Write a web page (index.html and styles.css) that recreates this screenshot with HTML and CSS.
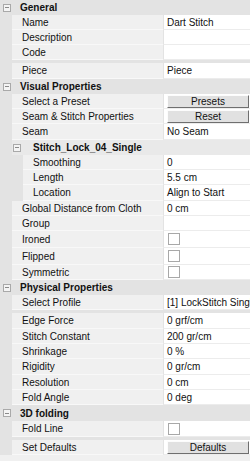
FILE: index.html
```html
<!DOCTYPE html>
<html lang="en">
<head>
  <meta charset="UTF-8" />
  <title>Property Editor</title>
  <link rel="stylesheet" href="styles.css">
</head>
<body>

<div class="props">

  <div class="group"><span class="toggle"></span>General</div>
  <div class="row"><span class="gut"></span><span class="label">Name</span><span class="value">Dart Stitch</span></div>
  <div class="row"><span class="gut"></span><span class="label">Description</span><span class="value"></span></div>
  <div class="row"><span class="gut"></span><span class="label">Code</span><span class="value"></span></div>
  <div class="band"></div>
  <div class="row tall"><span class="gut"></span><span class="label">Piece</span><span class="value">Piece</span></div>

  <div class="group"><span class="toggle"></span>Visual Properties</div>
  <div class="row"><span class="gut"></span><span class="label">Select a Preset</span><span class="value"><span class="btn">Presets</span></span></div>
  <div class="row"><span class="gut"></span><span class="label">Seam &amp; Stitch Properties</span><span class="value"><span class="btn">Reset</span></span></div>
  <div class="row tall"><span class="gut"></span><span class="label">Seam</span><span class="value">No Seam</span></div>
  <div class="group sub"><span class="gut"></span><span class="toggle"></span>Stitch_Lock_04_Single</div>
  <div class="row inner"><span class="gut"></span><span class="label">Smoothing</span><span class="value">0</span></div>
  <div class="row inner"><span class="gut"></span><span class="label">Length</span><span class="value">5.5 cm</span></div>
  <div class="row inner tall"><span class="gut"></span><span class="label">Location</span><span class="value">Align to Start</span></div>
  <div class="row"><span class="gut"></span><span class="label">Global Distance from Cloth</span><span class="value">0 cm</span></div>
  <div class="row"><span class="gut"></span><span class="label">Group</span><span class="value"></span></div>
  <div class="row check"><span class="gut"></span><span class="label">Ironed</span><span class="value"><span class="box"></span></span></div>
  <div class="row check"><span class="gut"></span><span class="label">Flipped</span><span class="value"><span class="box"></span></span></div>
  <div class="row"><span class="gut"></span><span class="label">Symmetric</span><span class="value"><span class="box"></span></span></div>

  <div class="group"><span class="toggle"></span>Physical Properties</div>
  <div class="row"><span class="gut"></span><span class="label">Select Profile</span><span class="value">[1] LockStitch Single</span></div>
  <div class="band"></div>
  <div class="row tall"><span class="gut"></span><span class="label">Edge Force</span><span class="value">0 grf/cm</span></div>
  <div class="row"><span class="gut"></span><span class="label">Stitch Constant</span><span class="value">200 gr/cm</span></div>
  <div class="row"><span class="gut"></span><span class="label">Shrinkage</span><span class="value">0 %</span></div>
  <div class="row tall"><span class="gut"></span><span class="label">Rigidity</span><span class="value">0 gr/cm</span></div>
  <div class="row"><span class="gut"></span><span class="label">Resolution</span><span class="value">0 cm</span></div>
  <div class="row"><span class="gut"></span><span class="label">Fold Angle</span><span class="value">0 deg</span></div>

  <div class="group tall"><span class="toggle"></span>3D folding</div>
  <div class="row tall"><span class="gut"></span><span class="label">Fold Line</span><span class="value"><span class="box"></span></span></div>
  <div class="band"></div>
  <div class="row"><span class="gut"></span><span class="label">Set Defaults</span><span class="value"><span class="btn">Defaults</span></span></div>

</div>

</body>
</html>
```

FILE: styles.css
```css
body {
  margin: 0;
  background-color: #f0f0f0;
  font-family: 'Liberation Sans', Arial, sans-serif;
  font-size: 10px;
  color: #111;
}
.props {
  width: 250px;
  overflow: hidden;
}
.group {
  display: flex;
  align-items: center;
  height: 15px;
  background-color: #e3e3e3;
  font-weight: bold;
  white-space: nowrap;
}
.group.tall { height: 16px; }
.toggle {
  box-sizing: border-box;
  width: 8px;
  height: 8px;
  margin: 0 9px 0 3px;
  border: 1px solid #a9a9a9;
  background: #f4f4f4 linear-gradient(#8a8a8a, #8a8a8a) no-repeat center / 4px 1px;
}
.group.sub .gut {
  align-self: stretch;
  width: 12px;
  background-color: #e3e3e3;
}
.group.sub {
  background-color: #e9e9e9;
}
.group.sub .toggle {
  margin: 0 12px 0 1px;
}
.row {
  display: grid;
  grid-template-columns: 12px 151px 1fr;
  height: 15px;
  white-space: nowrap;
}
.row.tall { height: 16px; }
.row.check { height: 17px; }
.row.inner {
  grid-template-columns: 23px 140px 1fr;
}
.gut {
  background-color: #e3e3e3;
}
.label, .value {
  display: flex;
  align-items: center;
  overflow: hidden;
  border-bottom: 1px solid #f8f8f8;
}
.label {
  padding-left: 10px;
  background-color: #f0f0f0;
}
.value {
  padding-left: 3px;
  background-color: #fff;
  border-left: 1px solid #e3e3e3;
  border-bottom-color: #ececec;
}
.band {
  height: 3px;
  background-color: #e3e3e3;
}
.btn {
  box-sizing: border-box;
  display: flex;
  align-items: center;
  justify-content: center;
  width: 82px;
  height: 13px;
  background-color: #e1e1e1;
  border: 1px solid;
  border-color: #fcfcfc #6f6f6f #6f6f6f #fcfcfc;
}
.box {
  box-sizing: border-box;
  width: 12px;
  height: 12px;
  margin-left: 1px;
  border: 1px solid #a8a8a8;
  background-color: #fff;
}
```
